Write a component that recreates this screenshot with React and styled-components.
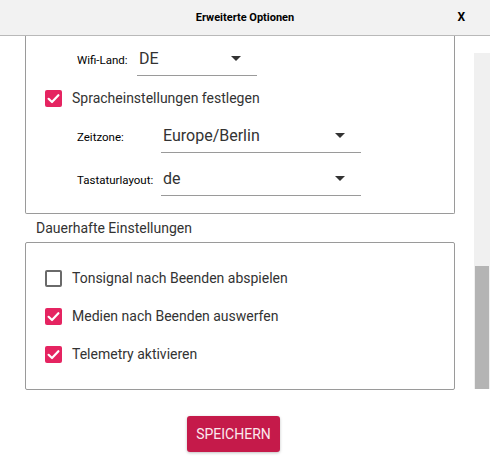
import React from "react";
import styled, { createGlobalStyle } from "styled-components";

const GlobalStyle = createGlobalStyle`
  html, body {
    margin: 0;
    padding: 0;
    background: #ffffff;
  }
  body {
    font-family: Roboto, "Liberation Sans", sans-serif;
    color: #333333;
  }
  * {
    box-sizing: border-box;
  }
`;

const languageRows = [
  { label: "Zeitzone:", value: "Europe/Berlin" },
  { label: "Tastaturlayout:", value: "de" },
];

const persistentOptions = [
  { label: "Tonsignal nach Beenden abspielen", checked: false },
  { label: "Medien nach Beenden auswerfen", checked: true },
  { label: "Telemetry aktivieren", checked: true },
];

function Checkbox({ checked }) {
  return (
    <CheckBoxBox $checked={checked}>
      {checked && (
        <svg width="17" height="17" viewBox="0 0 17 17">
          <polyline
            points="3.6,8.8 7,12 13.4,5.2"
            fill="none"
            stroke="#ffffff"
            strokeWidth="2.2"
            strokeLinecap="round"
            strokeLinejoin="round"
          />
        </svg>
      )}
    </CheckBoxBox>
  );
}

function Select({ value, width }) {
  return (
    <SelectBox $width={width}>
      <SelectValue>{value}</SelectValue>
      <Arrow />
    </SelectBox>
  );
}

export default function App() {
  return (
    <>
      <GlobalStyle />
      <Dialog>
        <Header>
          <Title>Erweiterte Optionen</Title>
          <CloseButton>X</CloseButton>
        </Header>
        <Body>
          <Content>
            <ClippedBox>
              <FieldRow>
                <FieldLabel $width={60}>Wifi-Land:</FieldLabel>
                <Select value="DE" width={120} />
              </FieldRow>
              <CheckRow>
                <Checkbox checked />
                <CheckLabel>Spracheinstellungen festlegen</CheckLabel>
              </CheckRow>
              {languageRows.map((row) => (
                <FieldRow key={row.label}>
                  <FieldLabel $width={84}>{row.label}</FieldLabel>
                  <Select value={row.value} width={200} />
                </FieldRow>
              ))}
            </ClippedBox>
            <SectionTitle>Dauerhafte Einstellungen</SectionTitle>
            <OptionsBox>
              {persistentOptions.map((opt) => (
                <CheckRow key={opt.label}>
                  <Checkbox checked={opt.checked} />
                  <CheckLabel>{opt.label}</CheckLabel>
                </CheckRow>
              ))}
            </OptionsBox>
          </Content>
          <ScrollTrack>
            <ScrollThumb />
          </ScrollTrack>
        </Body>
        <Footer>
          <SaveButton>SPEICHERN</SaveButton>
        </Footer>
      </Dialog>
    </>
  );
}

const Dialog = styled.div`
  width: 490px;
  height: 468px;
  display: flex;
  flex-direction: column;
  background: #ffffff;
`;

const Header = styled.div`
  height: 36px;
  flex-shrink: 0;
  display: grid;
  grid-template-columns: 1fr auto 1fr;
  align-items: center;
  background: #f2f2f2;
  border-bottom: 1px solid #b9b9b9;
  padding-bottom: 1px;
`;

const Title = styled.div`
  grid-column: 2;
  font-family: Roboto, "Liberation Sans", sans-serif;
  font-size: 11px;
  font-weight: 700;
  color: #000000;
`;

const CloseButton = styled.div`
  grid-column: 3;
  justify-self: end;
  margin-right: 25px;
  font-family: Roboto, "Liberation Sans", sans-serif;
  font-size: 12px;
  font-weight: 700;
  color: #000000;
`;

const Body = styled.div`
  display: flex;
  height: 354px;
`;

const Content = styled.div`
  width: 474px;
  padding: 0 19px 0 25px;
  display: flex;
  flex-direction: column;
`;

const ClippedBox = styled.div`
  height: 178px;
  border: 1px solid #9a9a9a;
  border-top: none;
  border-radius: 0 0 2px 2px;
  padding: 7px 0 0 19px;
  display: flex;
  flex-direction: column;
  gap: 10px;
`;

const OptionsBox = styled.div`
  height: 148px;
  border: 1px solid #9a9a9a;
  border-radius: 2px;
  padding: 23px 0 0 19px;
  display: flex;
  flex-direction: column;
  gap: 14px;
`;

const SectionTitle = styled.div`
  height: 28px;
  padding: 6px 0 0 11px;
  font-size: 14px;
  line-height: 16px;
  color: #333333;
`;

const FieldRow = styled.div`
  display: flex;
  align-items: center;
  padding-left: 32px;
  height: 33px;
`;

const FieldLabel = styled.div`
  width: ${(p) => p.$width}px;
  flex-shrink: 0;
  font-size: 11.5px;
  color: #000000;
`;

const SelectBox = styled.div`
  width: ${(p) => p.$width}px;
  height: 33px;
  display: flex;
  align-items: center;
  justify-content: space-between;
  padding: 0 16px 2px 2px;
  border-bottom: 1px solid #9a9a9a;
`;

const SelectValue = styled.span`
  font-size: 16px;
  color: #333333;
`;

const Arrow = styled.span`
  width: 0;
  height: 0;
  border-left: 5px solid transparent;
  border-right: 5px solid transparent;
  border-top: 5px solid #333333;
`;

const CheckRow = styled.div`
  display: flex;
  align-items: center;
  gap: 10px;
  height: 24px;
`;

const CheckBoxBox = styled.div`
  width: 17px;
  height: 17px;
  flex-shrink: 0;
  border-radius: 2px;
  background: ${(p) => (p.$checked ? "#e52461" : "#ffffff")};
  border: ${(p) => (p.$checked ? "none" : "2px solid #6a6a6a")};
  display: flex;
  align-items: center;
  justify-content: center;
`;

const CheckLabel = styled.span`
  font-size: 14px;
  color: #333333;
`;

const ScrollTrack = styled.div`
  width: 16px;
  margin-top: 17px;
  height: 336px;
  background: #f0f0f0;
  display: flex;
  flex-direction: column;
  justify-content: flex-end;
  padding: 0 1px;
`;

const ScrollThumb = styled.div`
  height: 123px;
  background: #b4b4b4;
`;

const Footer = styled.div`
  display: flex;
  justify-content: center;
  padding: 26px 23px 0 0;
`;

const SaveButton = styled.button`
  width: 93px;
  height: 36px;
  border: none;
  border-radius: 3px;
  background: #c51a4a;
  color: #fbe9ee;
  font-family: Roboto, "Liberation Sans", sans-serif;
  font-size: 14px;
  box-shadow: 0 1px 3px rgba(0, 0, 0, 0.25);
  cursor: pointer;
`;
